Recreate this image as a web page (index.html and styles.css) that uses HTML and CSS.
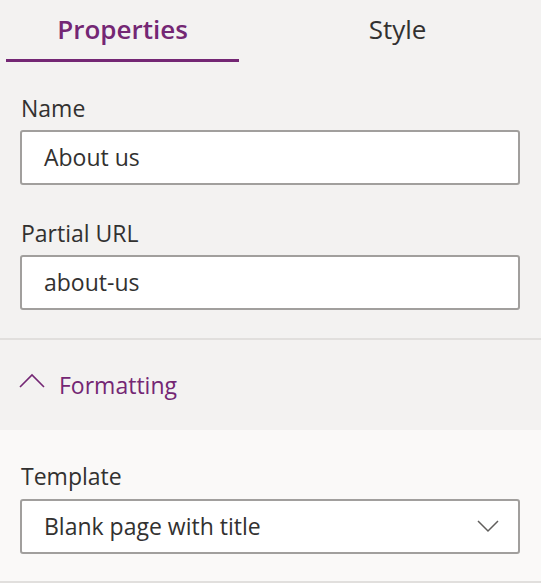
FILE: index.html
```html
<!DOCTYPE html>
<html lang="en">
<head>
<meta charset="utf-8">
<title>Page properties</title>
<link rel="stylesheet" href="styles.css">
</head>
<body>
<div class="panel">
  <div class="tabs">
    <div class="tab tab-active">Properties</div>
    <div class="tab">Style</div>
  </div>
  <div class="fields">
    <div class="field">
      <div class="label">Name</div>
      <div class="input">About us</div>
    </div>
    <div class="field">
      <div class="label">Partial URL</div>
      <div class="input">about-us</div>
    </div>
  </div>
  <div class="group-header">
    <svg class="chev-up" width="26" height="15" viewBox="0 0 26 15"><polyline points="1,14 13,2 25,14" fill="none" stroke="#742774" stroke-width="1.6"/></svg>
    <span class="group-title">Formatting</span>
  </div>
  <div class="group-body">
    <div class="field">
      <div class="label label-tight">Template</div>
      <div class="input select">
        <span>Blank page with title</span>
        <svg class="chev-down" width="22" height="13" viewBox="0 0 22 13"><polyline points="1,1 11,11 21,1" fill="none" stroke="#605e5c" stroke-width="1.5"/></svg>
      </div>
    </div>
  </div>
</div>
</body>
</html>
```
FILE: styles.css
```css
* { box-sizing: border-box; }
html, body { margin: 0; padding: 0; }
body {
  background: #f3f2f1;
  font-family: "Open Sans", "Noto Sans", sans-serif;
  color: #323130;
  width: 541px;
  height: 583px;
  overflow: hidden;
}
.tabs {
  display: flex;
  padding-left: 6px;
  height: 62px;
}
.tab {
  flex: 0 0 233px;
  height: 62px;
  text-align: center;
  font-size: 26px;
  line-height: 58px;
  color: #323130;
  margin-right: 42px;
}
.tab-active {
  color: #742774;
  font-weight: 600;
  border-bottom: 3px solid #742774;
}
.fields {
  padding: 30px 21px 0 20px;
  height: 276px;
}
.field + .field { margin-top: 32px; }
.label {
  font-size: 23px;
  line-height: 32px;
  padding-left: 1px;
  margin-bottom: 6px;
}
.label-tight { margin-bottom: 7px; }
.input {
  height: 55px;
  background: #fff;
  border: 2px solid #a19f9d;
  border-radius: 3px;
  padding: 0 22px;
  font-size: 23px;
  line-height: 51px;
  display: flex;
  align-items: center;
  justify-content: space-between;
}
.select { padding-right: 19px; }
.group-header {
  border-top: 2px solid #e1dfdd;
  height: 92px;
  display: flex;
  align-items: center;
  padding-left: 19px;
}
.chev-up { margin-right: 14px; margin-top: -9px; }
.group-title {
  font-size: 23px;
  color: #742774;
}
.group-body {
  background: #faf9f8;
  height: 153px;
  padding: 30px 21px 0 20px;
  border-bottom: 2px solid #e1dfdd;
}
```
